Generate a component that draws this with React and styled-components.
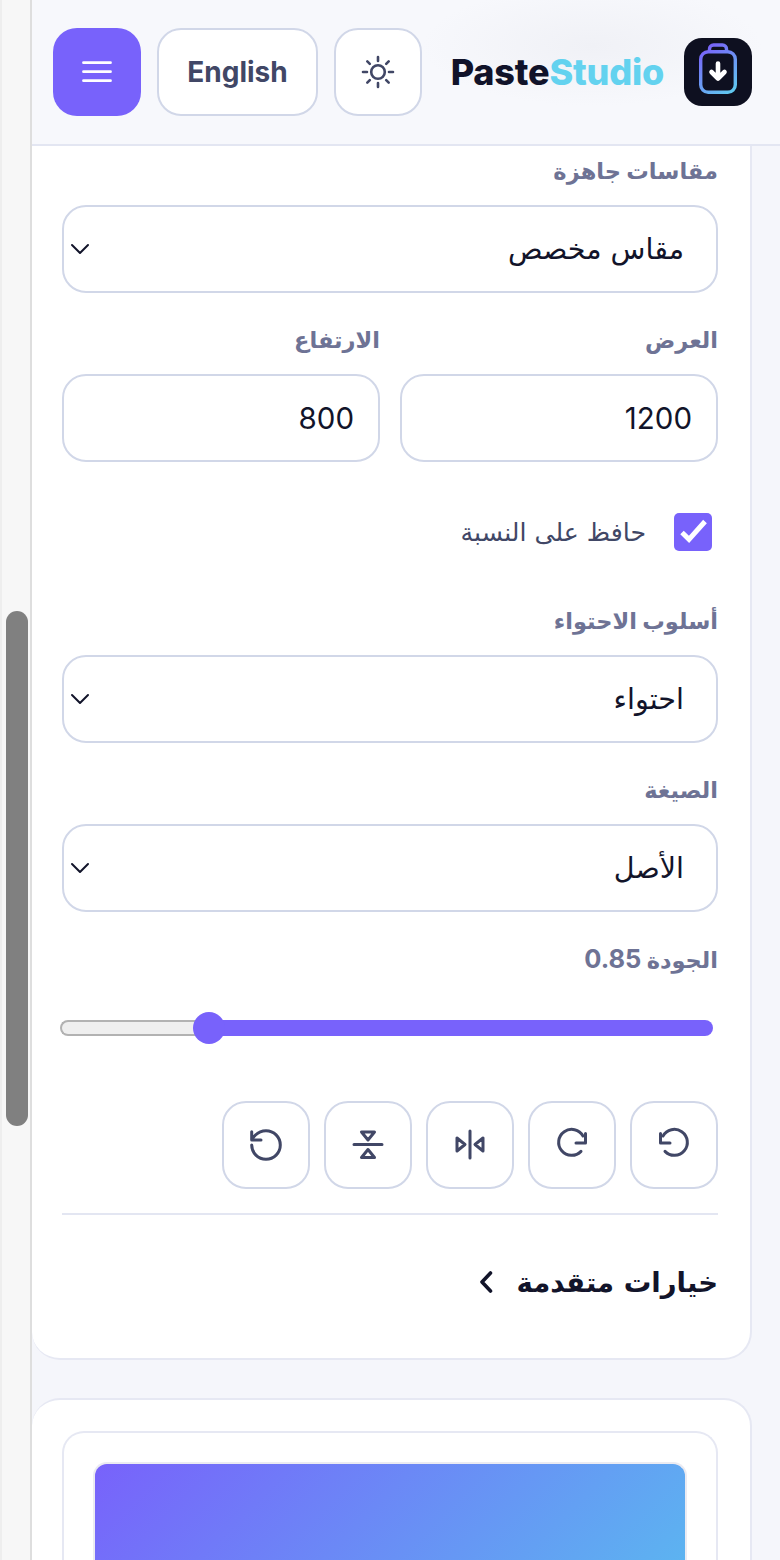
import React from "react";
import styled, { createGlobalStyle } from "styled-components";

const Global = createGlobalStyle`
  html, body { margin: 0; padding: 0; background: #f5f6fb; }
  * { box-sizing: border-box; }
  body { font-family: Inter, "DejaVu Sans", sans-serif; }
`;
const Page = styled.div`
  width: 780px; height: 1560px; display: flex; overflow: hidden; direction: ltr;
`;
const Scrollbar = styled.div`
  width: 32px; flex: none; background: #f7f7f7; border-right: 2px solid #dedede; border-left: 2px solid #eeeeee;
  padding: 611px 2px 0 4px;
`;
const Thumb = styled.div`
  width: 22px; height: 515px; border-radius: 11px; background: #808080;
`;
const Main = styled.div`
  flex: 1; min-width: 0; direction: rtl; background: #f5f6fb;
`;
const Header = styled.header`
  height: 146px; border-bottom: 2px solid #e3e6f2; padding: 28px 28px 0 21px;
  display: flex; justify-content: space-between; align-items: flex-start;
  background: radial-gradient(ellipse 170px 60px at 560px 46px, #f0f1f6 0%, rgba(240,241,246,0) 100%), #f7f8fc;
`;
const Brand = styled.div`
  display: flex; align-items: center; gap: 20px; height: 88px;
`;
const LogoBox = styled.div`
  width: 68px; height: 68px; border-radius: 18px; background: #0e1020;
  display: flex; align-items: center; justify-content: center;
`;
const Wordmark = styled.div`
  direction: ltr; font-size: 36px; font-weight: 800; letter-spacing: -0.2px; color: #11132a; line-height: 1;
  span { color: #63d2ef; }
`;
const Controls = styled.div`
  display: flex; gap: 16px;
`;
const HeadButton = styled.button`
  height: 88px; width: ${p => p.$w ?? 88}px; padding: 0; border-radius: 24px;
  background: ${p => p.$primary ? "#7862fb" : "#ffffff"};
  border: ${p => p.$primary ? "none" : "2px solid #d1d7e8"};
  color: ${p => p.$primary ? "#fff" : "#414766"};
  font: 700 28px Inter, sans-serif; display: flex; align-items: center; justify-content: center;
`;
const Card = styled.section`
  width: 720px; background: #fff; border: 2px solid #e6e8f3; border-left-width: 0;
  border-radius: ${p => p.$open ? "0 0 28px 28px" : "28px 28px 0 0"};
  border-top-width: ${p => p.$open ? "0" : "2px"};
  border-bottom-width: ${p => p.$open ? "2px" : "0"};
  padding: ${p => p.$open ? "8px 32px 0 30px" : "31px 32px 0 30px"};
  margin-inline-start: 28px;
  height: ${p => p.$open ? "1214px" : "auto"};
  margin-top: ${p => p.$open ? "0" : "38px"};
`;
const Label = styled.label`
  display: block; font: 700 22.5px Inter, "DejaVu Sans", sans-serif; color: #6e7395; line-height: 34px; height: 36px; margin-bottom: 15px;
`;
const LabelValue = styled.span`
  font-size: 25.5px;
`;
const Field = styled.div`
  height: 88px; border: 2px solid #d1d7e8; border-radius: 24px; background: #fff;
  display: flex; align-items: center; justify-content: space-between; padding: 0 32px 0 6px;
  font: 400 28.6px "DejaVu Sans", Inter, sans-serif; color: #12142a;
  margin-bottom: ${p => p.$gap ?? 0}px;
`;
const InputBox = styled(Field)`
  padding: 0 24px; font-family: Inter, sans-serif; font-size: 29.5px;
`;
const TwoCols = styled.div`
  display: grid; grid-template-columns: 1fr 1fr; gap: 20px; margin: 30px 0 0;
`;
const CheckRow = styled.div`
  display: flex; align-items: center; gap: 28px; margin: 51px 0 0; padding-inline-start: 6px; height: 38px;
  font: 400 25.2px "DejaVu Sans", sans-serif; color: #414766;
`;
const CheckBox = styled.span`
  width: 38px; height: 38px; border-radius: 5px; background: #7862fb; color: #fff;
  display: flex; align-items: center; justify-content: center;
`;
const Gap = styled.div`
  height: ${p => p.$h}px;
`;
const Slider = styled.div`
  position: relative; direction: ltr; height: 16px; margin: 0 5px 0 -2px; display: flex; border-radius: 8px;
`;
const TrackRest = styled.div`
  flex: 0 0 ${p => p.$w}px; background: #efefef; border: 2px solid #b2b2b2; border-right: 0; border-radius: 8px 0 0 8px;
`;
const TrackFill = styled.div`
  flex: 1; background: #7862fb; border-radius: 0 8px 8px 0;
`;
const Knob = styled.div`
  position: absolute; left: 133px; top: -8px; width: 32px; height: 32px; border-radius: 50%; background: #7862fb;
`;
const Tools = styled.div`
  display: flex; gap: 14px; margin-top: 65px;
`;
const Tool = styled.button`
  width: 88px; height: 88px; border: 2px solid #d1d7e8; border-radius: 24px; background: #fff; color: #414766; padding: 0;
  display: flex; align-items: center; justify-content: center;
`;
const Divider = styled.hr`
  border: 0; height: 2px; background: #e3e6f2; margin: 24px 0 0;
`;
const Advanced = styled.div`
  display: flex; align-items: center; gap: 24px; margin-top: 47px; height: 40px;
  font: 700 27.5px "DejaVu Sans", sans-serif; color: #12142a;
`;
const Inner = styled.div`
  border: 2px solid #e6e8f3; border-bottom: 0; border-radius: 22px 22px 0 0; padding: 29px 29px 0; height: 140px;
`;
const Preview = styled.div`
  height: 110px; border-radius: 14px 14px 0 0; border: 2px solid #ebebf2; border-bottom: 0;
  background: linear-gradient(135deg, #7862fb 0%, #56c6ee 100%);
  background-size: 594px 250px;
`;

const LogoIcon = () => (
  <svg width="68" height="68" viewBox="0 0 68 68" fill="none">
    <defs>
      <linearGradient id="lg" x1="18" y1="8" x2="52" y2="56" gradientUnits="userSpaceOnUse">
        <stop offset="0" stopColor="#7a5cfa" />
        <stop offset="1" stopColor="#5ed0ee" />
      </linearGradient>
    </defs>
    <rect x="16.7" y="13.7" width="34.6" height="40.6" rx="7.5" stroke="url(#lg)" strokeWidth="3.4" />
    <path d="M25.5 14v-3a4 4 0 0 1 4-4h9a4 4 0 0 1 4 4v3" stroke="url(#lg)" strokeWidth="3.4" />
    <path d="M34 25.5v15M27.5 34l6.5 6.5 6.5-6.5" stroke="#fff" strokeWidth="4.6" strokeLinecap="round" strokeLinejoin="round" />
  </svg>
);
const Glyph = ({ d, size = 40, width = 3 }) => (
  <svg width={size} height={size} viewBox="0 0 40 40" fill="none" stroke="currentColor" strokeWidth={width} strokeLinecap="round" strokeLinejoin="round">
    <path d={d} />
  </svg>
);
const ICONS = {
  menu: "M6.500 10.700h27M6.500 19.700h27M6.500 28.700h27",
  sun: "M20 5v4M20 31v4M5 20h4M31 20h4M9.300 9.300l2.500 2.500M28.200 28.200l2.500 2.500M9.300 30.700l2.500-2.500M28.200 11.800l2.500-2.500M26.800 20a6.800 6.800 0 1 1-13.600 0 6.800 6.800 0 0 1 13.600 0Z",
  ccw: "M9 11A13 13 0 1 1 11 26.400M6.500 8.500V18H16",
  cw: "M31 11A13 13 0 1 0 29 26.400M33.500 8.500V18H24",
  flipH: "M20 6v27M7 13v13l8-6.500ZM33 13v13l-8-6.500Z",
  flipV: "M6 19.500h28M13.500 7h13L20 15ZM13.500 32.500h13L20 24.500Z",
  reset: "M5.700 20a14.300 14.300 0 1 0 14.300-14.300 15 15 0 0 0-10.500 4.300L5.700 14M5.700 6.700V15H15",
};

const Caret = () => (
  <svg width="20" height="12" viewBox="0 0 20 12" fill="none" stroke="#12142a" strokeWidth="2" strokeLinecap="round" strokeLinejoin="round">
    <path d="M2 2l8 8 8-8" />
  </svg>
);
const Select = ({ value, gap }) => (
  <Field $gap={gap}>
    <span>{value}</span>
    <Caret />
  </Field>
);

export default function App() {
  return (
    <Page>
      <Global />
      <Scrollbar><Thumb /></Scrollbar>
      <Main>
        <Header>
          <Brand>
            <LogoBox><LogoIcon /></LogoBox>
            <Wordmark>Paste<span>Studio</span></Wordmark>
          </Brand>
          <Controls>
            <HeadButton aria-label="theme"><Glyph d={ICONS.sun} width={2.6} /></HeadButton>
            <HeadButton $w={161}>English</HeadButton>
            <HeadButton $primary aria-label="menu"><Glyph d={ICONS.menu} width={2.8} /></HeadButton>
          </Controls>
        </Header>
        <Card $open>
          <Label>مقاسات جاهزة</Label>
          <Select value="مقاس مخصص" />
          <TwoCols>
            <div>
              <Label>العرض</Label>
              <InputBox>1200</InputBox>
            </div>
            <div>
              <Label>الارتفاع</Label>
              <InputBox>800</InputBox>
            </div>
          </TwoCols>
          <CheckRow>
            <CheckBox>
              <svg width="38" height="38" viewBox="0 0 38 38" fill="none" stroke="currentColor" strokeWidth="5">
                <path d="M8 19.500l7 6.800L31 8.500" />
              </svg>
            </CheckBox>
            حافظ على النسبة
          </CheckRow>
          <Gap $h={53} />
          <Label>أسلوب الاحتواء</Label>
          <Select value="احتواء" gap={30} />
          <Label>الصيغة</Label>
          <Select value="الأصل" gap={30} />
          <Label>الجودة <LabelValue>0.85</LabelValue></Label>
          <Gap $h={27} />
          <Slider>
            <TrackRest $w={149} />
            <TrackFill />
            <Knob />
          </Slider>
          <Tools>
            <Tool aria-label="rotate left"><Glyph d={ICONS.ccw} /></Tool>
            <Tool aria-label="rotate right"><Glyph d={ICONS.cw} /></Tool>
            <Tool aria-label="flip horizontal"><Glyph d={ICONS.flipH} /></Tool>
            <Tool aria-label="flip vertical"><Glyph d={ICONS.flipV} /></Tool>
            <Tool aria-label="reset"><Glyph d={ICONS.reset} /></Tool>
          </Tools>
          <Divider />
          <Advanced>
            خيارات متقدمة
            <svg width="14" height="22" viewBox="0 0 14 22" fill="none" stroke="currentColor" strokeWidth="3.600" strokeLinecap="round" strokeLinejoin="round">
              <path d="M11.500 2L3 11l8.500 9" />
            </svg>
          </Advanced>
        </Card>
        <Card>
          <Inner>
            <Preview />
          </Inner>
        </Card>
      </Main>
    </Page>
  );
}
